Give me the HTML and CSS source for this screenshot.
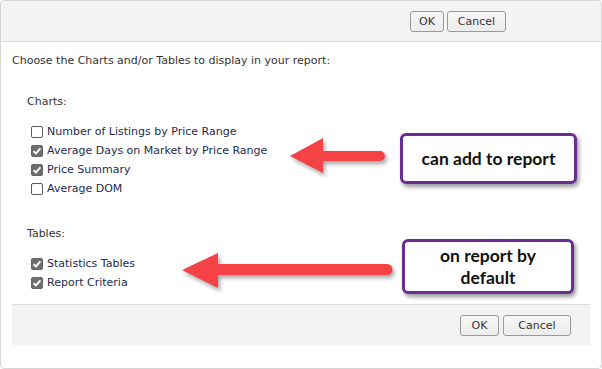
FILE: index.html
```html
<!DOCTYPE html>
<html lang="en">
<head>
  <meta charset="utf-8">
  <title>Report Options</title>
<link rel="stylesheet" href="styles.css">
</head>
<body>
  <div class="dialog">
    <div class="toolbar">
      <button class="btn btn-ok">OK</button>
      <button class="btn btn-cancel">Cancel</button>
    </div>
    <div class="content">
      <p class="intro">Choose the Charts and/or Tables to display in your report:</p>

      <div class="group">
        <div class="group-title">Charts:</div>
        <ul class="options">
          <li><span class="box"></span>Number of Listings by Price Range</li>
          <li><span class="box checked"></span>Average Days on Market by Price Range</li>
          <li><span class="box checked"></span>Price Summary</li>
          <li><span class="box"></span>Average DOM</li>
        </ul>
      </div>

      <div class="group group-tables">
        <div class="group-title">Tables:</div>
        <ul class="options">
          <li><span class="box checked"></span>Statistics Tables</li>
          <li><span class="box checked"></span>Report Criteria</li>
        </ul>
      </div>

      <div class="footer">
        <button class="btn btn-ok-foot">OK</button>
        <button class="btn btn-cancel-foot">Cancel</button>
      </div>
    </div>

    <!-- annotations drawn over the dialog -->
    <svg class="arrows" width="602" height="369" viewBox="0 0 602 369">
      <path d="M290 156 L323 138 L323 151 L380 151 A5 5 0 0 1 380 161 L323 161 L323 173 Z"/>
      <path d="M182 270 L218 253 L218 264 L387 264 A5.5 5.5 0 0 1 387 275 L218 275 L218 288 Z"/>
    </svg>
    <div class="note note-add">can add to report</div>
    <div class="note note-default">on report by<br>default</div>
  </div>
</body>
</html>
```

FILE: styles.css
```css
body {
  margin: 0;
  font-family: "DejaVu Sans", Verdana, sans-serif;
  font-size: 11px;
  color: #333;
}
.dialog {
  position: relative;
  width: 600px;
  height: 367px;
  border: 1px solid #d6d6d6;
  border-radius: 4px;
  background: #fff;
  overflow: hidden;
}
.toolbar {
  display: flex;
  justify-content: flex-end;
  align-items: center;
  gap: 3px;
  height: 40px;
  padding-right: 95px;
  background: #f4f4f4;
  border-bottom: 1px solid #dcdcdc;
}
.btn {
  height: 21px;
  padding: 0;
  border: 1px solid #9a9a9a;
  border-radius: 3px;
  background: linear-gradient(#f7f7f7, #ececec);
  font-family: inherit;
  font-size: 11px;
  color: #333;
}
.btn-ok { width: 34px; }
.btn-cancel { width: 59px; }
.btn-ok-foot { width: 39px; }
.btn-cancel-foot { width: 68px; }

.content {
  padding: 0 11px;
}
.intro {
  margin: 9px 0 0;
  line-height: 19px;
}
.group {
  margin-top: 22px;
  padding-left: 15px;
}
.group-tables {
  margin-top: 26px;
}
.group-title {
  line-height: 19px;
  margin-bottom: 11px;
}
.options {
  list-style: none;
  margin: 0;
  padding: 0 0 0 4px;
  color: #1d2c4c;
}
.options li {
  display: flex;
  align-items: center;
  line-height: 19px;
}
.box {
  box-sizing: border-box;
  width: 12px;
  height: 12px;
  margin-right: 4px;
  border: 1px solid #5a5a5a;
  border-radius: 2px;
  background: #fff;
}
.box.checked {
  border-color: #666;
  background: #6e6e6e url("data:image/svg+xml,%3Csvg xmlns='http://www.w3.org/2000/svg' width='10' height='10' viewBox='0 0 10 10'%3E%3Cpath d='M1.6 5.2 L4 7.4 L8.4 2.4' fill='none' stroke='%23fff' stroke-width='1.9'/%3E%3C/svg%3E") center / 10px 10px no-repeat;
}

.footer {
  display: flex;
  justify-content: flex-end;
  align-items: center;
  gap: 4px;
  height: 40px;
  margin-top: 12px;
  padding-right: 19px;
  background: #f3f3f3;
  border-top: 1px solid #dcdcdc;
}

.arrows {
  position: absolute;
  left: -1px;
  top: -1px;
  pointer-events: none;
}
.arrows path {
  fill: #f44247;
  filter: drop-shadow(2px 3px 2px rgba(0, 0, 0, 0.35));
}
.note {
  position: absolute;
  box-sizing: border-box;
  display: flex;
  align-items: center;
  justify-content: center;
  text-align: center;
  border: 3px solid #6a2d91;
  border-radius: 6px;
  background: #fff;
  box-shadow: 2px 3px 4px rgba(0, 0, 0, 0.4);
  font-family: Lato, "Open Sans", sans-serif;
  font-weight: bold;
  font-size: 17.5px;
  line-height: 22px;
  color: #111;
}
.note-add {
  left: 399px;
  top: 132px;
  width: 177px;
  height: 51px;
}
.note-default {
  left: 401px;
  top: 238px;
  width: 172px;
  height: 55px;
}
```
